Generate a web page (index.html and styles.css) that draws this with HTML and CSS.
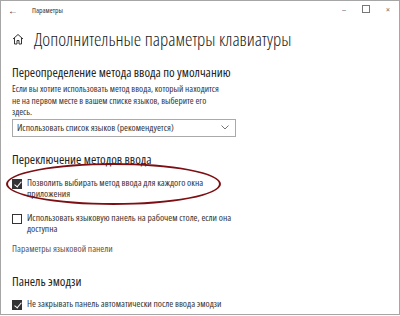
FILE: index.html
```html
<!DOCTYPE html>
<html lang="ru">
  <head>
    <meta charset="UTF-8" />
    <title>Параметры</title>
    <link rel="stylesheet" href="styles.css">
  </head>
  <body>
    <div class="window">
      <div class="titlebar">
        <span class="back">&#8592;</span>
        <span class="app-title">Параметры</span>
        <span class="controls">
          <span class="ctl">&#8211;</span>
          <span class="ctl max"></span>
          <span class="ctl">&#215;</span>
        </span>
      </div>

      <div class="page-head">
        <svg class="home" width="12" height="12" viewBox="0 0 12 12">
          <path d="M1 6 L6 1.5 L11 6 M2.5 5 V11 H5 V7.5 H7 V11 H9.5 V5" fill="none" stroke="#333" stroke-width="1"/>
        </svg>
        <h1>Дополнительные параметры клавиатуры</h1>
      </div>

      <div class="content">
        <h2>Переопределение метода ввода по умолчанию</h2>
        <p class="desc">
          Если вы хотите использовать метод ввода, который находится<br>
          не на первом месте в вашем списке языков, выберите его<br>
          здесь.
        </p>
        <div class="select">
          <span>Использовать список языков (рекомендуется)</span>
          <svg width="8" height="5" viewBox="0 0 8 5"><path d="M0.5 0.5 L4 4 L7.5 0.5" fill="none" stroke="#666" stroke-width="0.9"/></svg>
        </div>

        <h2 class="sec">Переключение методов ввода</h2>
        <div class="marked">
          <label class="check on">
            <span class="box"></span>
            <span>Позволить выбирать метод ввода для каждого окна<br>приложения</span>
          </label>
          <div class="ellipse"></div>
        </div>
        <label class="check second">
          <span class="box"></span>
          <span>Использовать языковую панель на рабочем столе, если она<br>доступна</span>
        </label>

        <a class="link">Параметры языковой панели</a>

        <h2 class="emoji">Панель эмодзи</h2>
        <label class="check last on">
          <span class="box"></span>
          <span>Не закрывать панель автоматически после ввода эмодзи</span>
        </label>
      </div>
    </div>
  </body>
</html>
```

FILE: styles.css
```css
* {
  box-sizing: border-box;
}
body {
  margin: 0;
  font-family: "Open Sans", "Noto Sans", sans-serif;
  color: #222;
  background: #fff;
}
.window {
  width: 400px;
  height: 315px;
  border: 1px solid #a6a6a6;
  overflow: hidden;
}
.titlebar {
  display: flex;
  align-items: center;
  height: 17px;
  padding: 0 0 0 7px;
  font-size: 7.5px;
  font-stretch: 85%;
  color: #333;
}
.back {
  font-size: 10px;
  width: 24px;
}
.app-title {
  flex: 1;
}
.controls {
  display: flex;
  color: #777;
}
.ctl {
  width: 22px;
  text-align: center;
  font-size: 9px;
}
.max::before {
  content: "";
  display: inline-block;
  width: 6px;
  height: 6px;
  border: 1px solid #777;
}
.page-head {
  display: flex;
  align-items: center;
  padding: 0 0 0 11px;
  height: 41px;
}
.home {
  margin-right: 10px;
}
h1 {
  margin: 0;
  font-size: 18.8px;
  font-weight: 300;
  font-stretch: 76%;
  color: #222;
  white-space: nowrap;
}
.content {
  padding: 0 0 0 11px;
}
h2 {
  margin: 5px 0 0;
  font-size: 12.8px;
  line-height: 16px;
  font-weight: 400;
  font-stretch: 78%;
  color: #222;
  white-space: nowrap;
}
.desc {
  margin: 3px 0 0;
  font-size: 9.3px;
  font-stretch: 78%;
  line-height: 11.5px;
  color: #333;
}
.select {
  display: flex;
  align-items: center;
  justify-content: space-between;
  width: 224px;
  height: 18px;
  margin-top: 1px;
  padding: 0 6px 0 4px;
  border: 1px solid #aaa;
  font-size: 9.5px;
  font-stretch: 78%;
  color: #333;
}
.sec {
  margin-top: 14px;
}
.marked {
  position: relative;
}
.ellipse {
  position: absolute;
  left: -6px;
  top: -14px;
  width: 215px;
  height: 42px;
  border: 2px solid #7d0f14;
  border-radius: 50%;
}
.check {
  display: flex;
  align-items: flex-start;
  margin-top: 10px;
  font-size: 9.5px;
  font-stretch: 78%;
  line-height: 11.5px;
  color: #333;
}
.check.second {
  margin-top: 12px;
}
.check.last {
  margin-top: 9px;
}
.box {
  flex: none;
  width: 10px;
  height: 10px;
  margin: 2px 5px 0 0;
  border: 1px solid #333;
  position: relative;
}
.check.on .box {
  background: #333;
}
.check.on .box::after {
  content: "";
  position: absolute;
  left: 2.5px;
  top: 0px;
  width: 3px;
  height: 6px;
  border: solid #fff;
  border-width: 0 1.3px 1.3px 0;
  transform: rotate(40deg);
}
.link {
  display: block;
  margin-top: 8px;
  font-size: 9.5px;
  font-stretch: 78%;
  line-height: 11.5px;
  color: #555;
}
.emoji {
  margin-top: 19px;
}
```
